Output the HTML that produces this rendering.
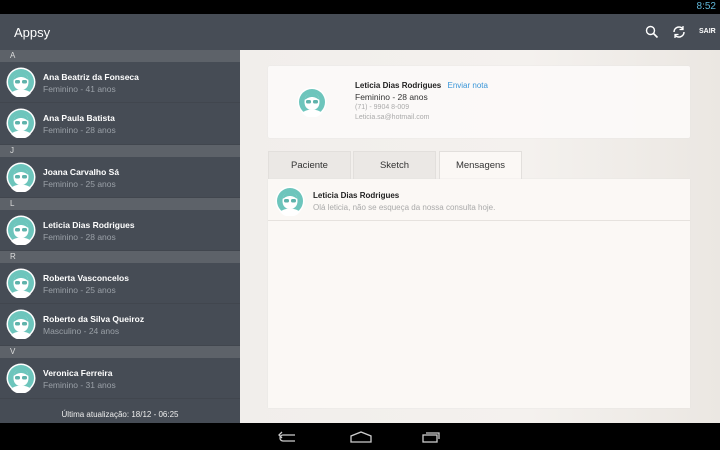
<!DOCTYPE html>
<html><head><meta charset="utf-8"><style>
*{margin:0;padding:0;box-sizing:border-box}
body{width:720px;height:450px;overflow:hidden;font-family:"Liberation Sans",sans-serif;position:relative;background:#f2eeea}
.sb{position:absolute;top:0;left:0;width:720px;height:14px;background:#000;color:#5fb6d8;font-size:10px;text-align:right;padding-right:4px;line-height:14px}
.ab{position:absolute;top:14px;left:0;width:720px;height:36px;background:#474d56;color:#fff}
.ab .t{position:absolute;left:14px;top:11px;font-size:13px}
.side{position:absolute;top:50px;left:0;width:240px;height:373px;background:#464c55;color:#fff}
.hd{height:12px;background:#5d6269;font-size:8px;line-height:12px;padding-left:10px;color:#ddd}
.it{height:41.3px;position:relative;border-bottom:1px solid #41464e}
.it svg{position:absolute;left:6px;top:5px}
.it .n{position:absolute;left:43px;top:10px;font-size:8.5px;font-weight:bold}
.it .s{position:absolute;left:43px;top:22px;font-size:8.5px;color:#9aa0a7}
.foot{position:absolute;top:360px;left:0;width:240px;text-align:center;font-size:8px;color:#eee}
.nav{position:absolute;top:423px;left:0;width:720px;height:27px;background:#000}
.main{position:absolute;top:50px;left:240px;width:480px;height:373px;background:linear-gradient(90deg,#f1eeeb 0%,#f4f1ee 60%,#ebe7e2 100%)}
.card{position:absolute;left:28px;top:16px;width:422px;height:72px;background:rgba(252,250,248,.92);border-radius:2px;box-shadow:0 0 1px #ddd}
.tab{position:absolute;top:101px;height:28px;width:83px;background:#ebe8e5;font-size:9.5px;text-align:center;line-height:28px;color:#333;border:1px solid #e2dfdc;border-bottom:none}
.panel{position:absolute;left:28px;top:129px;width:422px;height:229px;background:#fbf8f5;box-shadow:0 0 1px #ddd}
</style></head><body>
<div class="sb">8:52</div>
<div class="ab"><div class="t">Appsy</div>
<svg style="position:absolute;left:645px;top:11px" width="14" height="14"><circle cx="5.5" cy="5.5" r="4" fill="none" stroke="#fff" stroke-width="1.4"/><path d="M8.5 8.5l4 4" stroke="#fff" stroke-width="1.6"/></svg>
<svg style="position:absolute;left:672px;top:11px" width="14" height="14"><path d="M2 7a5 5 0 0 1 9-3M12 7a5 5 0 0 1-9 3" fill="none" stroke="#fff" stroke-width="1.5"/><path d="M11 1v3.5H7.5M3 13V9.5h3.5" fill="none" stroke="#fff" stroke-width="1.3"/></svg>
<div style="position:absolute;left:699px;top:14px;font-size:7px;font-weight:bold">SAIR</div></div>
<svg width="0" height="0" style="position:absolute"><defs><g id="av"><circle cx="15" cy="15" r="14.5" fill="#fff"/><circle cx="15" cy="15" r="13" fill="#6dc5bc"/><path d="M7.5 15c0-6 3-8.5 7.5-8.5s7.5 2.5 7.5 8.5c0 5-3 8-7.5 8s-7.5-3-7.5-8z" fill="#fff"/><path d="M7.5 13c1-5 4-7 7.5-7s6.5 2 7.5 7c-3-2-5-3-7.5-3s-4.5 1-7.5 3z" fill="#6dc5bc"/><rect x="9" y="13" width="5" height="3.5" rx="1.5" fill="#5fb3ab"/><rect x="16" y="13" width="5" height="3.5" rx="1.5" fill="#5fb3ab"/><path d="M5 26c2-2 6-3.5 10-3.5s8 1.5 10 3.5a13 13 0 0 1-20 0z" fill="#fff"/></g></defs></svg>
<div class="side">
<div class="hd">A</div>
<div class="it"><svg width="30" height="30"><use href="#av"/></svg><div class="n">Ana Beatriz da Fonseca</div><div class="s">Feminino - 41 anos</div></div>
<div class="it"><svg width="30" height="30"><use href="#av"/></svg><div class="n">Ana Paula Batista</div><div class="s">Feminino - 28 anos</div></div>
<div class="hd">J</div>
<div class="it"><svg width="30" height="30"><use href="#av"/></svg><div class="n">Joana Carvalho Sá</div><div class="s">Feminino - 25 anos</div></div>
<div class="hd">L</div>
<div class="it"><svg width="30" height="30"><use href="#av"/></svg><div class="n">Leticia Dias Rodrigues</div><div class="s">Feminino - 28 anos</div></div>
<div class="hd">R</div>
<div class="it"><svg width="30" height="30"><use href="#av"/></svg><div class="n">Roberta Vasconcelos</div><div class="s">Feminino - 25 anos</div></div>
<div class="it"><svg width="30" height="30"><use href="#av"/></svg><div class="n">Roberto da Silva Queiroz</div><div class="s">Masculino - 24 anos</div></div>
<div class="hd">V</div>
<div class="it"><svg width="30" height="30"><use href="#av"/></svg><div class="n">Veronica Ferreira</div><div class="s">Feminino - 31 anos</div></div>
<div class="foot">Última atualização: 18/12 - 06:25</div>
</div>
<div class="main">
<div class="card">
<svg width="30" height="30" style="position:absolute;left:29px;top:21px"><use href="#av"/></svg>
<div style="position:absolute;left:87px;top:15px;font-size:8px;color:#222"><b>Leticia Dias Rodrigues</b> <span style="color:#3a96d8;margin-left:4px">Enviar nota</span></div>
<div style="position:absolute;left:87px;top:26px;font-size:8.5px;color:#333">Feminino - 28 anos</div>
<div style="position:absolute;left:87px;top:38px;font-size:7px;color:#aaa">(71) - 9904 8-009</div>
<div style="position:absolute;left:87px;top:48px;font-size:7px;color:#aaa">Leticia.sa@hotmail.com</div>
</div>
<div class="tab" style="left:28px">Paciente</div>
<div class="tab" style="left:113px">Sketch</div>
<div class="tab" style="left:199px;background:#fbf8f5;height:29px">Mensagens</div>
<div class="panel">
<div style="height:42px;border-bottom:1px solid #e6e2de;position:relative">
<svg width="30" height="30" style="position:absolute;left:7px;top:7px"><use href="#av"/></svg>
<div style="position:absolute;left:45px;top:12px;font-size:8px;font-weight:bold;color:#222">Leticia Dias Rodrigues</div>
<div style="position:absolute;left:45px;top:24px;font-size:8px;color:#aaa">Olá leticia, não se esqueça da nossa consulta hoje.</div>
</div></div>
</div>
<div class="nav">
<svg style="position:absolute;left:278px;top:8px" width="20" height="12"><path d="M17 10H5a3 3 0 0 1 0-6h12M4 1L1 4l3 3" fill="none" stroke="#ccc" stroke-width="1.3"/></svg>
<svg style="position:absolute;left:350px;top:8px" width="22" height="12"><path d="M1 11V5l10-4 10 4v6z" fill="none" stroke="#ccc" stroke-width="1.3"/></svg>
<svg style="position:absolute;left:422px;top:7px" width="20" height="13"><rect x="1" y="5" width="14" height="7" fill="none" stroke="#ccc" stroke-width="1.3"/><path d="M4 3h13v6" fill="none" stroke="#ccc" stroke-width="1.3"/></svg>
</div>
</body></html>
